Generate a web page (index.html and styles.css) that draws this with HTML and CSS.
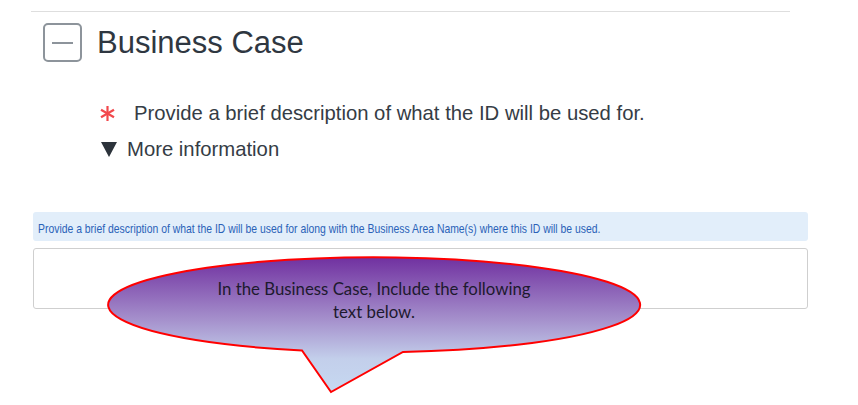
FILE: index.html
```html
<!DOCTYPE html>
<html lang="en">
<head>
<meta charset="utf-8">
<title>Business Case</title>
<link rel="stylesheet" href="styles.css">
</head>
<body>
<div class="page">
  <div class="divider"></div>
  <div class="section-header">
    <div class="toggle"><span class="minus"></span></div>
    <h2 class="title">Business Case</h2>
  </div>
  <div class="question">
    <div class="q-row">
      <svg class="asterisk" width="15" height="15" viewBox="0 0 15 15" aria-hidden="true">
        <g stroke="#f2484c" stroke-width="2.2" stroke-linecap="butt">
          <line x1="7.5" y1="0" x2="7.5" y2="15"/>
          <line x1="1" y1="3.75" x2="14" y2="11.25"/>
          <line x1="1" y1="11.25" x2="14" y2="3.75"/>
        </g>
      </svg>
      <span class="q-text">Provide a brief description of what the ID will be used for.</span>
    </div>
    <div class="more-row">
      <svg class="caret" width="16" height="15" viewBox="0 0 16 15" aria-hidden="true">
        <polygon points="0,0 16,0 8,15" fill="#2c333b"/>
      </svg>
      <span class="more-text">More information</span>
    </div>
  </div>
  <div class="help-bar"><span class="help-text">Provide a brief description of what the ID will be used for along with the Business Area Name(s) where this ID will be used.</span></div>
  <div class="textbox"></div>
</div>

<svg class="callout" width="858" height="405" viewBox="0 0 858 405" aria-hidden="true">
  <defs>
    <linearGradient id="cg" x1="0" y1="257" x2="0" y2="393" gradientUnits="userSpaceOnUse">
      <stop offset="0" stop-color="#7030a0"/>
      <stop offset="0.45" stop-color="#a48ecb"/>
      <stop offset="0.75" stop-color="#c3cfeb"/>
      <stop offset="1" stop-color="#c6d9f1"/>
    </linearGradient>
  </defs>
  <path d="M 302 350.5 A 266 47.5 0 1 1 403 352 L 331 392 Z" fill="url(#cg)" stroke="#ff0000" stroke-width="2" stroke-linejoin="miter"/>
</svg>
<div class="callout-text">In the Business Case, Include the following<br>text below.</div>
</body>
</html>
```

FILE: styles.css
```css
html, body {
  margin: 0;
  padding: 0;
  background: #ffffff;
}

body {
  font-family: "Liberation Sans", Arial, sans-serif;
  width: 858px;
  height: 405px;
  overflow: hidden;
  position: relative;
}

.page {
  padding-top: 11px;
}

.divider {
  margin-left: 31px;
  width: 759px;
  border-top: 1px solid #dedede;
}

.section-header {
  display: flex;
  align-items: center;
  gap: 15px;
  margin: 11px 0 0 43px;
}

.toggle {
  box-sizing: border-box;
  width: 39px;
  height: 39px;
  border: 2px solid #8d949b;
  border-radius: 5px;
  display: flex;
  align-items: center;
  justify-content: center;
}

.minus {
  display: block;
  width: 21px;
  height: 2px;
  background: #8d949b;
}

.title {
  margin: 0;
  font-weight: normal;
  font-size: 31px;
  line-height: 39px;
  color: #2f3741;
}

.question {
  margin: 39px 0 0 100px;
}

.q-row {
  display: flex;
  align-items: center;
  gap: 19px;
  height: 24px;
}

.q-text {
  font-size: 20.3px;
  line-height: 24px;
  color: #353c45;
}

.more-row {
  display: flex;
  align-items: center;
  gap: 10px;
  height: 24px;
  margin-top: 12px;
  margin-left: 1px;
}

.more-text {
  font-size: 20.3px;
  line-height: 24px;
  color: #353c45;
}

.help-bar {
  box-sizing: border-box;
  margin: 51px 0 0 33px;
  width: 775px;
  height: 29px;
  background: #e2eefa;
  border-radius: 3px;
  padding: 4px 0 0 5px;
  overflow: hidden;
  white-space: nowrap;
}

.help-text {
  display: inline-block;
  font-size: 13px;
  line-height: 25px;
  color: #2a62b8;
  transform: scaleX(0.8);
  transform-origin: left center;
}

.textbox {
  box-sizing: border-box;
  margin: 7px 0 0 33px;
  width: 775px;
  height: 61px;
  border: 1px solid #cfcfcf;
  border-radius: 3px;
  background: #ffffff;
}

.callout {
  position: absolute;
  left: 0;
  top: 0;
}

.callout-text {
  position: absolute;
  left: 174px;
  top: 277px;
  width: 400px;
  text-align: center;
  font-family: Lato, "Open Sans", sans-serif;
  font-size: 16.8px;
  line-height: 23px;
  color: #1d1a2e;
}
```
